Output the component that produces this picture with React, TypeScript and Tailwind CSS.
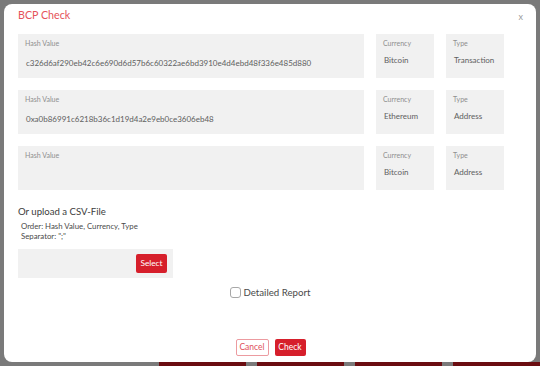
import React from 'react';

type Entry = {
  hash: string;
  currency: string;
  type: string;
};

const entries: Entry[] = [
  {
    hash: 'c326d6af290eb42c6e690d6d57b6c60322ae6bd3910e4d4ebd48f336e485d880',
    currency: 'Bitcoin',
    type: 'Transaction',
  },
  { hash: '0xa0b86991c6218b36c1d19d4a2e9eb0ce3606eb48', currency: 'Ethereum', type: 'Address' },
  { hash: '', currency: 'Bitcoin', type: 'Address' },
];

function Field({ label, value, wide }: { label: string; value: string; wide?: boolean }) {
  return (
    <div
      className={`h-[44px] bg-[#f1f1f1] px-[7px] pt-[4px] ${wide ? 'w-[346px]' : 'w-[58px]'}`}
    >
      <div className="text-[7px] leading-[10px] text-[#8e8e8e]">{label}</div>
      <div
        className={`text-[8px] leading-[12px] text-[#606060] whitespace-nowrap pl-[1px] ${
          wide ? 'mt-[9px]' : 'mt-[6px]'
        }`}
      >
        {value}
      </div>
    </div>
  );
}

export default function App() {
  return (
    <div
      className="relative w-[540px] h-[366px] overflow-hidden bg-[#7a7a7a]"
      style={{ fontFamily: 'Lato, "Open Sans", sans-serif' }}
    >
      {/* Seite hinter dem Dialog */}
      <div className="flex h-full flex-col">
        <div className="flex-1" />
        <div className="flex h-[4px] pl-[159px] gap-[11px]">
          <div className="w-[90px] bg-[#6b0d11]" />
          <div className="w-[90px] bg-[#6b0d11]" />
          <div className="w-[90px] bg-[#6b0d11]" />
          <div className="w-[90px] bg-[#6b0d11]" />
        </div>
      </div>

      {/* Dialog */}
      <div className="absolute left-[4px] top-[4px] flex h-[358px] w-[532px] flex-col rounded-[8px] bg-white pl-[14px] pr-[13px] pt-[3px] pb-[6px]">
        <div className="flex items-start justify-between">
          <h1 className="text-[10.7px] leading-[16px] text-[#e5525a]">BCP Check</h1>
          <button className="mt-[5px] text-[9px] leading-[10px] text-[#9a9a9a]">x</button>
        </div>

        <div className="mt-[11px] flex flex-col gap-[12px]">
          {entries.map((e, i) => (
            <div key={i} className="flex gap-[12px]">
              <Field label="Hash Value" value={e.hash} wide />
              <Field label="Currency" value={e.currency} />
              <Field label="Type" value={e.type} />
            </div>
          ))}
        </div>

        <div className="mt-[15px] text-[9.6px] leading-[14px] text-[#3c3c3c]">Or upload a CSV-File</div>
        <div className="mt-[3px] pl-[3px] text-[7.8px] leading-[9.5px] text-[#4a4a4a]">
          <div>Order: Hash Value, Currency, Type</div>
          <div>Separator: &quot;;&quot;</div>
        </div>

        <div className="mt-[8px] flex h-[29px] w-[155px] items-center justify-end bg-[#f1f1f1] pr-[6px]">
          <button className="h-[19px] w-[31px] rounded-[2px] bg-[#d61f2b] text-[8.3px] text-white">
            Select
          </button>
        </div>

        <div className="mt-[8px] flex items-center justify-center gap-[2px]">
          <span className="h-[11px] w-[11px] rounded-[3px] border border-[#a8a8a8] bg-white" />
          <span className="text-[9.7px] leading-[12px] text-[#4a4a4a]">Detailed Report</span>
        </div>

        <div className="mt-auto flex justify-center gap-[6px]">
          <button className="h-[17px] w-[33px] rounded-[2px] border border-[#ec9ba0] bg-white text-[8.5px] text-[#e0505a]">
            Cancel
          </button>
          <button className="h-[17px] w-[31px] rounded-[2px] bg-[#d61f2b] text-[8.5px] text-white">
            Check
          </button>
        </div>
      </div>
    </div>
  );
}
